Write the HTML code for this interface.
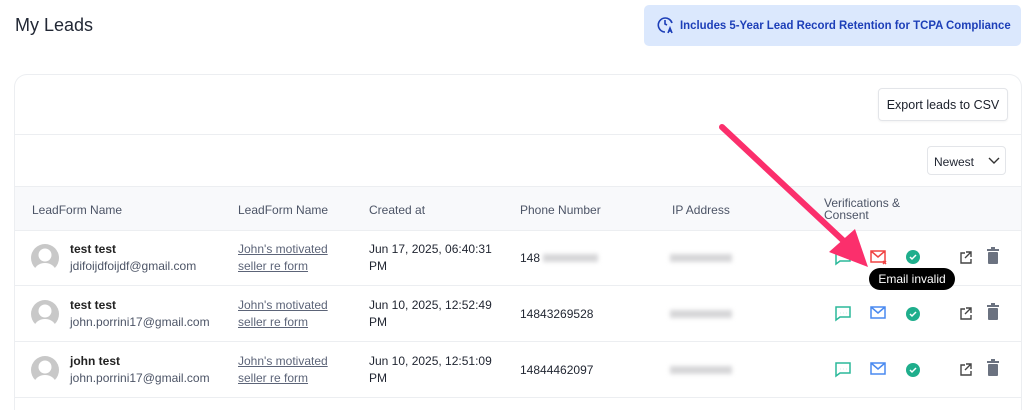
<!DOCTYPE html>
<html><head><meta charset="utf-8"><style>
*{box-sizing:border-box;margin:0;padding:0}
html,body{width:1024px;height:410px;overflow:hidden}
body{background:#fff;font-family:"Liberation Sans",sans-serif;position:relative;color:#1f2430}
.abs{position:absolute}
h1{position:absolute;left:15px;top:15px;font-size:18px;font-weight:400;color:#222835}
.banner{left:644px;top:5px;width:377px;height:41px;background:#dbe8fd;border-radius:5px;color:#1d3fb8;font-weight:700;font-size:12px;white-space:nowrap}
.banner span{position:absolute;left:36px;top:13px;transform:scaleX(0.95);transform-origin:left center}
.card{left:14px;top:74px;width:1008px;height:336px;border:1px solid #eceef1;border-bottom:none;border-radius:13px 13px 0 0;background:#fff;overflow:hidden}
.btn{position:absolute;left:863px;top:13px;width:130px;height:33px;border:1px solid #e3e5e9;border-radius:4px;font-size:12.5px;display:flex;align-items:center;justify-content:center;color:#1a1f2a;box-shadow:0 1px 2px rgba(0,0,0,.05)}
.sel{position:absolute;left:912px;top:71px;width:79px;height:29px;border:1px solid #e3e5e9;border-radius:4px;font-size:12px;padding:8px 0 0 6px}
.hline{position:absolute;left:0;width:100%;height:1px;background:#eceef1}
.thead{position:absolute;left:0;top:111px;width:100%;height:45px;background:#f8f9fb;border-top:1px solid #eceef1;border-bottom:1px solid #eceef1}
.th{position:absolute;font-size:12px;color:#4c5466}
.row{position:absolute;left:0;width:100%;height:56px;border-bottom:1px solid #eceef1}
.row div{position:absolute;font-size:12px;line-height:17px}
.av{width:28px;height:28px;border-radius:50%;background:#c8c8c8;left:17px;top:14px;overflow:hidden}
.name{left:56px;top:11px;font-weight:700;color:#222}
.mail{left:56px;top:28px;color:#4c5466}
.lnk{left:224px;top:11px;color:#5c6478;text-decoration:underline}
.dt{left:355px;top:11px;color:#1f2430}
.ph{left:506px;top:20px}
.blur{background:#d6d6d8;filter:blur(2px);height:8px}
.tip{left:869px;top:268px;width:86px;height:22px;background:#000;color:#fff;border-radius:11px;font-size:12px;display:flex;align-items:center;justify-content:center}
</style></head><body>
<h1>My Leads</h1>
<div class="abs banner"><svg class="abs" style="left:12px;top:10px" width="20" height="20" viewBox="0 0 20 20" fill="none" stroke="#1d3fb8" stroke-width="1.6"><path d="M16 8A7 7 0 1 0 9 17"/><path d="M9 5v4l2 1"/><path d="M12 18l2-5 2 5M12.8 16h2.4"/></svg><span>Includes 5-Year Lead Record Retention for TCPA Compliance</span></div>
<div class="abs card">
 <div class="btn">Export leads to CSV</div>
 <div class="hline" style="top:59px"></div>
 <div class="sel">Newest<svg class="abs" style="left:60px;top:10px" width="12" height="8" viewBox="0 0 12 8" fill="none" stroke="#333" stroke-width="1.4"><path d="M1 1l5 5 5-5"/></svg></div>
 <div class="thead">
  <div class="th" style="left:17px;top:16px">LeadForm Name</div>
  <div class="th" style="left:223px;top:16px">LeadForm Name</div>
  <div class="th" style="left:354px;top:16px">Created at</div>
  <div class="th" style="left:505px;top:16px">Phone Number</div>
  <div class="th" style="left:657px;top:16px">IP Address</div>
  <div class="th" style="left:809px;top:10px;line-height:12px">Verifications &amp;<br>Consent</div>
 </div>
</div>
<div class="abs" style="left:14px;top:0;width:1008px;height:410px;overflow:hidden">
 <div class="row" style="top:230px"><div class="av"></div><div class="name">test test</div><div class="mail">jdifoijdfoijdf@gmail.com</div><div class="lnk">John's motivated<br>seller re form</div><div class="dt">Jun 17, 2025, 06:40:31<br>PM</div><div class="ph">148</div><div class="blur" style="left:529px;top:24px;width:55px"></div><div class="blur" style="left:656px;top:24px;width:62px"></div></div>
 <div class="row" style="top:286px"><div class="av"></div><div class="name">test test</div><div class="mail">john.porrini17@gmail.com</div><div class="lnk">John's motivated<br>seller re form</div><div class="dt">Jun 10, 2025, 12:52:49<br>PM</div><div class="ph">14843269528</div><div class="blur" style="left:656px;top:24px;width:62px"></div></div>
 <div class="row" style="top:342px"><div class="av"></div><div class="name">john test</div><div class="mail">john.porrini17@gmail.com</div><div class="lnk">John's motivated<br>seller re form</div><div class="dt">Jun 10, 2025, 12:51:09<br>PM</div><div class="ph">14844462097</div><div class="blur" style="left:656px;top:24px;width:62px"></div></div>
</div>
<svg class="abs" style="left:0;top:0" width="1024" height="410">
 <defs>
  <g id="av"><circle cx="14" cy="11" r="6.5" fill="#fff"/><path d="M3 28a11 9 0 0 1 22 0z" fill="#fff"/></g>
 </defs>
 <g transform="translate(31,244)"><use href="#av"/></g>
 <g transform="translate(31,300)"><use href="#av"/></g>
 <g transform="translate(31,356)"><use href="#av"/></g>
 <g fill="none" stroke-width="1.5">
  <path d="M836 251h14v10h-10l-4 3z" stroke="#2bb99a"/>
  <path d="M871 251h14v11h-14z M871 251l7 6 7-6" stroke="#f04444"/>
  <path d="M883 261l3 3M886 261l-3 3" stroke="#f04444"/>
  <path d="M836 307h14v10h-10l-4 3z" stroke="#2bb99a"/>
  <path d="M840 313h.1M843 313h.1M846 313h.1" stroke="#2bb99a" stroke-width="2"/>
  <path d="M871 307h14v11h-14z M871 307l7 6 7-6" stroke="#4a8af0"/>
  <path d="M836 363h14v10h-10l-4 3z" stroke="#2bb99a"/>
  <path d="M840 369h.1M843 369h.1M846 369h.1" stroke="#2bb99a" stroke-width="2"/>
  <path d="M871 363h14v11h-14z M871 363l7 6 7-6" stroke="#4a8af0"/>
 </g>
 <circle cx="913" cy="257" r="7" fill="#1fae8c"/><path d="M910 257l2 2 4-4" stroke="#fff" fill="none" stroke-width="1.5"/>
 <circle cx="913" cy="314" r="7" fill="#1fae8c"/><path d="M910 314l2 2 4-4" stroke="#fff" fill="none" stroke-width="1.5"/>
 <circle cx="913" cy="370" r="7" fill="#1fae8c"/><path d="M910 370l2 2 4-4" stroke="#fff" fill="none" stroke-width="1.5"/>
 <g fill="none" stroke="#444" stroke-width="1.4">
  <path d="M965 253h-4v10h10v-4M966 252h5v5M971 252l-6 6"/>
  <path d="M965 309h-4v10h10v-4M966 308h5v5M971 308l-6 6"/>
  <path d="M965 365h-4v10h10v-4M966 364h5v5M971 364l-6 6"/>
 </g>
 <g fill="#6b7280">
  <rect x="987" y="249" width="12" height="2"/><rect x="991" y="247" width="4" height="2"/><rect x="988" y="252" width="10" height="12" rx="1"/>
  <rect x="987" y="305" width="12" height="2"/><rect x="991" y="303" width="4" height="2"/><rect x="988" y="308" width="10" height="12" rx="1"/>
  <rect x="987" y="361" width="12" height="2"/><rect x="991" y="359" width="4" height="2"/><rect x="988" y="364" width="10" height="12" rx="1"/>
 </g>
 <line x1="722" y1="127" x2="848" y2="245" stroke="#fb2f6c" stroke-width="6" stroke-linecap="round"/>
 <polygon points="868,267 829,252 855,229" fill="#fb2f6c"/>
</svg>
<div class="abs tip">Email invalid</div>
</body></html>
